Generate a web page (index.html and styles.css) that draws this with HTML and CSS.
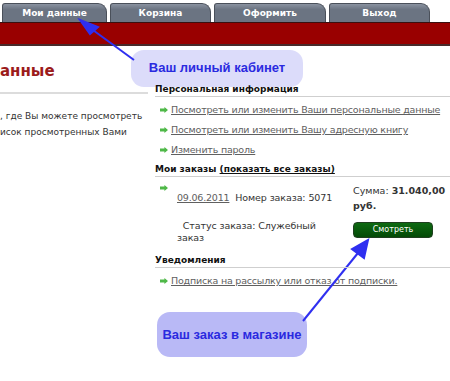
FILE: index.html
```html
<!DOCTYPE html>
<html lang="ru">
<head>
  <meta charset="UTF-8">
  <meta name="viewport" content="width=device-width, initial-scale=1.0">
  <link rel="stylesheet" href="styles.css">
  <title>Мои данные</title>
</head>
<body>
  <div class="page">
    <!-- top menu -->
    <ul class="tabs">
      <li class="tab tab-first"><a href="#">Мои данные</a></li>
      <li class="tab"><a href="#">Корзина</a></li>
      <li class="tab tab-wide"><a href="#">Оформить</a></li>
      <li class="tab"><a href="#">Выход</a></li>
    </ul>
    <div class="redbar"></div>

    <div class="main">
      <div class="left">
        <h1 class="page-title">анные</h1>
        <p class="intro">, где Вы можете просмотреть<br>исок просмотренных Вами</p>
      </div>

      <div class="right">
        <h4 class="box-title">Персональная информация</h4>
        <ul class="links">
          <li><span class="bullet"></span><a href="#">Посмотреть или изменить Ваши персональные данные</a></li>
          <li><span class="bullet"></span><a href="#">Посмотреть или изменить Вашу адресную книгу</a></li>
          <li><span class="bullet"></span><a href="#">Изменить пароль</a></li>
        </ul>

        <h4 class="box-title">Мои заказы <a href="#">(показать все заказы)</a></h4>
        <div class="order">
          <div class="order-info">
            <span class="bullet bullet-block"></span>
            <div class="order-line"><a href="#">09.06.2011</a>&nbsp; Номер заказа: 5071</div>
            <div class="order-status">&nbsp; Статус заказа: Служебный<br>заказ</div>
          </div>
          <div class="order-sum">
            <div class="sum">Сумма: <b>31.040,00</b></div>
            <div class="sum"><b>руб.</b></div>
            <a href="#" class="btn-view">Смотреть</a>
          </div>
        </div>

        <h4 class="box-title">Уведомления</h4>
        <ul class="links">
          <li><span class="bullet"></span><a href="#">Подписка на рассылку или отказ от подписки.</a></li>
        </ul>
      </div>
    </div>

    <!-- annotations -->
    <div class="callout callout-cabinet">Ваш личный кабинет</div>
    <div class="callout callout-order">Ваш заказ в магазине</div>
    <svg class="arrows" width="450" height="381" viewBox="0 0 450 381">
      <g stroke="#2f2ff0" stroke-width="2" fill="#2f2ff0">
        <line x1="134" y1="60" x2="86" y2="25"/>
        <polygon points="80,20 98,27 90,34"/>
        <line x1="303" y1="321" x2="362" y2="248"/>
        <polygon points="368,240 364,258 352,249"/>
      </g>
    </svg>
  </div>
</body>
</html>
```

FILE: styles.css
```css
*{
  margin: 0;
  padding: 0;
  box-sizing: border-box;
}
body{
  background-color: #ffffff;
  font-family: 'DejaVu Sans', Verdana, sans-serif;
  font-size: 10px;
  color: #333;
}
.page{
  position: relative;
  width: 450px;
  height: 381px;
  overflow: hidden;
}

/* tabs */
.tabs{
  list-style: none;
  display: flex;
  gap: 3px;
  height: 22px;
  padding: 3px 0 0 2px;
}
.tab{
  width: 101px;
  background: linear-gradient(#8a92a0, #6b7482 30%, #6b7482);
  border: 1px solid #4a505a;
  border-bottom: none;
  border-radius: 3px 9px 0 0;
  display: flex;
  justify-content: center;
  align-items: center;
}
.tab-first{
  width: 105px;
}
.tab-wide{
  width: 112px;
}
.tab a{
  color: #fff;
  font-size: 9px;
  font-weight: bold;
  text-decoration: none;
}
.redbar{
  height: 24px;
  background-color: #990000;
  border-top: 1px solid #3a1010;
  border-bottom: 2px solid #4a2a2a;
}

/* content */
.main{
  display: flex;
}
.left{
  width: 150px;
  flex-shrink: 0;
}
.page-title{
  font-size: 15px;
  font-weight: bold;
  color: #9b1b1b;
  line-height: 18px;
  padding: 16px 0 12px;
  border-bottom: 2px solid #dcdcdc;
  margin-right: 2px;
}
.intro{
  font-size: 9px;
  line-height: 16px;
  padding-top: 14px;
  color: #333;
  white-space: nowrap;
}
.right{
  flex: 1;
  padding: 37px 0 0 5px;
}
.box-title{
  font-size: 9px;
  font-weight: bold;
  color: #111;
  line-height: 12px;
  border-bottom: 1px solid #cfcfcf;
  padding-bottom: 1px;
  position: relative;
  z-index: 1;
}
.box-title a{
  color: #111;
}
.links{
  list-style: none;
  padding: 6px 0 0 5px;
}
.links li{
  line-height: 14px;
  margin-bottom: 6px;
  white-space: nowrap;
}
.links a, .order-line a{
  color: #606060;
  font-size: 9.5px;
  letter-spacing: -0.2px;
}
.bullet{
  display: inline-block;
  width: 8px;
  height: 6px;
  margin-right: 3px;
  background: #4fb848;
  clip-path: polygon(0 25%, 55% 25%, 55% 0, 100% 50%, 55% 100%, 55% 75%, 0 75%);
}
.bullet-block{
  display: block;
}

/* order */
.order{
  display: flex;
  padding: 8px 0 10px 5px;
}
.order-info{
  width: 193px;
  font-size: 9.5px;
  letter-spacing: -0.1px;
}
.order-line{
  padding-left: 17px;
  line-height: 14px;
}
.order-status{
  padding-left: 17px;
  line-height: 12px;
  margin-top: 15px;
}
.order-sum{
  flex: 1;
  font-size: 9.5px;
  line-height: 15px;
  margin-top: -2px;
  white-space: nowrap;
}
.sum b{
  font-size: 9.5px;
}
.btn-view{
  display: block;
  width: 80px;
  height: 16px;
  margin-top: 9px;
  background: linear-gradient(#0e6a12, #034a06);
  border: 1px solid #1f3f1f;
  border-radius: 4px;
  color: #fff;
  text-decoration: none;
  text-align: center;
  font-size: 8px;
  line-height: 14px;
}

/* annotations */
.callout{
  position: absolute;
  display: flex;
  justify-content: center;
  align-items: center;
  font-family: 'Liberation Sans', Arial, sans-serif;
  font-size: 13px;
  font-weight: bold;
  color: #2a2ae0;
  border-radius: 13px;
}
.callout-cabinet{
  left: 131px;
  top: 50px;
  width: 172px;
  height: 37px;
  background-color: #dcdcfa;
  padding-bottom: 2px;
}
.callout-order{
  left: 157px;
  top: 312px;
  width: 150px;
  height: 45px;
  background-color: #b9b9f6;
}
.arrows{
  position: absolute;
  left: 0;
  top: 0;
}
```
